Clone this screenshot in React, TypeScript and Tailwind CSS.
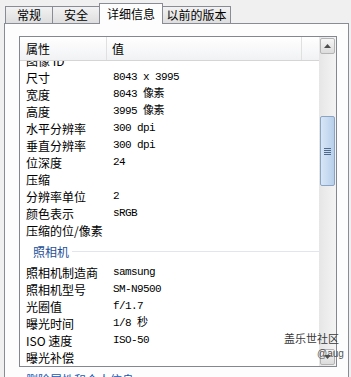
import React from "react";

const cjk = '"Noto Sans CJK SC", "Noto Sans", sans-serif';
const mono = '"Liberation Mono", "Noto Sans CJK SC", monospace';

type Row = { k: string; v?: string };

const rows1: Row[] = [
  { k: "图像 ID" },
  { k: "尺寸", v: "8043 x 3995" },
  { k: "宽度", v: "8043 像素" },
  { k: "高度", v: "3995 像素" },
  { k: "水平分辨率", v: "300 dpi" },
  { k: "垂直分辨率", v: "300 dpi" },
  { k: "位深度", v: "24" },
  { k: "压缩" },
  { k: "分辨率单位", v: "2" },
  { k: "颜色表示", v: "sRGB" },
  { k: "压缩的位/像素" },
];

const rows2: Row[] = [
  { k: "照相机制造商", v: "samsung" },
  { k: "照相机型号", v: "SM-N9500" },
  { k: "光圈值", v: "f/1.7" },
  { k: "曝光时间", v: "1/8 秒" },
  { k: "ISO 速度", v: "ISO-50" },
  { k: "曝光补偿" },
];

function DataRow({ r }: { r: Row }) {
  return (
    <div className="flex h-[17px] items-center text-[12px] text-black">
      <div className="w-[92px] shrink-0 pl-[6px] leading-none" style={{ fontFamily: cjk }}>
        {r.k}
      </div>
      <div
        className="pl-[1px] text-[11px] leading-none tracking-[-0.6px]"
        style={{ fontFamily: mono }}
      >
        {r.v}
      </div>
    </div>
  );
}

function Tab({ label, selected, w }: { label: string; selected?: boolean; w: string }) {
  if (selected) {
    return (
      <div
        className={`relative z-10 -mb-[1px] flex h-[21px] items-start justify-center border border-b-0 border-[#898c95] bg-[#fdfdfd] pt-[1px] text-[12px] text-black ${w}`}
      >
        {label}
      </div>
    );
  }
  return (
    <div
      className={`flex h-[17px] items-start justify-center border border-b-0 border-[#898c95] bg-gradient-to-b from-[#f2f2f2] to-[#dedede] text-[12px] leading-[16px] text-black ${w}`}
    >
      {label}
    </div>
  );
}

export default function App() {
  return (
    <div
      className="relative h-[377px] w-[351px] overflow-hidden bg-[#f0f0f0]"
      style={{ fontFamily: cjk }}
    >
      {/* tabs */}
      <div className="flex h-[23px] items-end pl-[5px]">
        <Tab label="常规" w="w-[48px]" />
        <Tab label="安全" w="w-[48px] -ml-[1px]" />
        <Tab label="详细信息" selected w="w-[64px] -ml-[1px]" />
        <Tab label="以前的版本" w="w-[69px] -ml-[1px]" />
      </div>

      {/* panel */}
      <div className="ml-[4px] h-[360px] w-[345px] border border-[#898c95] bg-[#fdfdfd] pl-[14px] pt-[12px]">
        {/* list box */}
        <div className="flex h-[331px] w-[318px] border border-[#828790] bg-white">
          <div className="flex min-w-0 flex-1 flex-col">
            {/* header */}
            <div className="flex h-[24px] shrink-0 border-b border-[#d5d5d5] bg-gradient-to-b from-[#ffffff] to-[#f1f2f4] text-[12px] text-black">
              <div className="flex w-[87px] items-center border-r border-[#e0e0e0] pl-[6px]">属性</div>
              <div className="flex w-[195px] items-center border-r border-[#e0e0e0] pl-[5px]">值</div>
              <div className="flex-1" />
            </div>
            {/* rows */}
            <div className="flex-1 overflow-hidden">
              <div className="-mt-[9px]">
                {rows1.map((r) => (
                  <DataRow key={r.k} r={r} />
                ))}
                <div className="flex h-[25px] items-center pl-[13px]">
                  <span className="text-[12px] leading-none text-[#1e4f96]">照相机</span>
                  <div className="ml-[3px] h-px flex-1 bg-[#e2e6ec]" />
                </div>
                {rows2.map((r) => (
                  <DataRow key={r.k} r={r} />
                ))}
              </div>
            </div>
          </div>

          {/* scrollbar */}
          <div className="flex w-[17px] shrink-0 flex-col bg-gradient-to-r from-[#e6e6e6] to-[#f4f4f4] px-[1px] py-[1px]">
            <div className="flex h-[16px] items-center justify-center rounded-[2px] border border-[#b4b4b4] bg-gradient-to-b from-[#f6f6f6] to-[#dcdcdc]">
              <svg width="7" height="4" viewBox="0 0 7 4">
                <path d="M0 4 L3.5 0 L7 4 Z" fill="#4d4d4d" />
              </svg>
            </div>
            <div className="h-[62px]" />
            <div className="flex h-[70px] items-center justify-center rounded-[2px] border border-[#8ca4c4] bg-gradient-to-r from-[#d8e6f6] to-[#b8d0ec]">
              <div className="flex flex-col gap-[1px]">
                <div className="h-px w-[7px] bg-[#4f6a8c]" />
                <div className="h-px w-[7px] bg-[#4f6a8c]" />
                <div className="h-px w-[7px] bg-[#4f6a8c]" />
                <div className="h-px w-[7px] bg-[#4f6a8c]" />
              </div>
            </div>
            <div className="flex-1" />
            <div className="flex h-[16px] items-center justify-center rounded-[2px] border border-[#b4b4b4] bg-gradient-to-b from-[#f6f6f6] to-[#dcdcdc]">
              <svg width="7" height="4" viewBox="0 0 7 4">
                <path d="M0 0 L3.5 4 L7 0 Z" fill="#4d4d4d" />
              </svg>
            </div>
          </div>
        </div>

        {/* clipped link below */}
        <div className="mt-[7px] pl-[7px] text-[12px] leading-none text-[#1a56b0]">删除属性和个人信息</div>
      </div>

      {/* watermark */}
      <div className="absolute left-[284px] top-[333px] text-[11px] leading-none text-[#3a3a3a]">
        盖乐世社区
      </div>
      <div
        className="absolute left-[317px] top-[349px] text-[10px] leading-none text-[#555]"
        style={{ fontFamily: '"Liberation Sans", sans-serif' }}
      >
        @aug
      </div>
    </div>
  );
}
